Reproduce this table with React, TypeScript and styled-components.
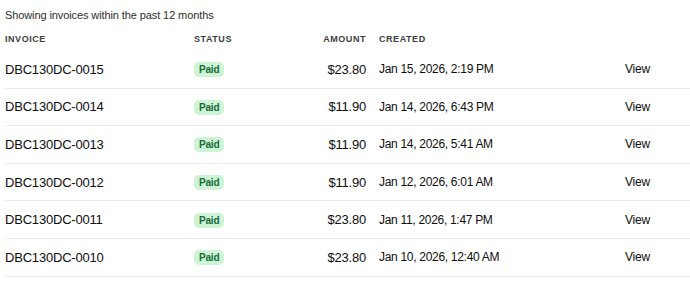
import React from "react";
import styled, { createGlobalStyle } from "styled-components";

const Global = createGlobalStyle`
  html, body { margin: 0; padding: 0; background: #ffffff; }
  body { font-family: "Liberation Sans", Arial, sans-serif; color: #0d0d0d; }
`;

const Page = styled.div`
  padding: 0 0 0 5px;
`;

const Caption = styled.div`
  box-sizing: border-box;
  height: 27px;
  padding-top: 8px;
  line-height: 15px;
  font-size: 11px;
  letter-spacing: -0.1px;
  color: #2d2d2d;
`;

const Row = styled.div<{ $head?: boolean }>`
  display: grid;
  grid-template-columns: 189px 105px 67px 246px 1fr;
  align-items: center;
  height: ${(p) => (p.$head ? "24px" : "37.6px")};
  box-sizing: border-box;
  border-bottom: ${(p) => (p.$head ? "none" : "1px solid #ececec")};
`;

const HeadCell = styled.div<{ $right?: boolean; $gap?: boolean }>`
  font-size: 9px;
  font-weight: 700;
  letter-spacing: 0.55px;
  text-transform: uppercase;
  color: #3d3d3d;
  text-align: ${(p) => (p.$right ? "right" : "left")};
  padding-left: ${(p) => (p.$gap ? "13px" : "0")};
`;

const Cell = styled.div<{ $right?: boolean }>`
  font-size: 13px;
  letter-spacing: -0.2px;
  color: #0d0d0d;
  text-align: ${(p) => (p.$right ? "right" : "left")};
  white-space: nowrap;
`;

const DateCell = styled.div`
  font-size: 12px;
  letter-spacing: -0.3px;
  color: #0d0d0d;
  padding-left: 13px;
  white-space: nowrap;
`;

const Badge = styled.span`
  display: inline-flex;
  align-items: center;
  justify-content: center;
  height: 15px;
  padding: 0 5px;
  border-radius: 5px;
  background: #cdf4d4;
  color: #17693b;
  font-size: 10px;
  font-weight: 700;
`;

const ViewLink = styled.span`
  font-size: 12px;
  letter-spacing: -0.2px;
  color: #0d0d0d;
  padding-left: 13px;
  cursor: pointer;
`;

const invoices = [
  ["DBC130DC-0015", "$23.80", "Jan 15, 2026, 2:19 PM"],
  ["DBC130DC-0014", "$11.90", "Jan 14, 2026, 6:43 PM"],
  ["DBC130DC-0013", "$11.90", "Jan 14, 2026, 5:41 AM"],
  ["DBC130DC-0012", "$11.90", "Jan 12, 2026, 6:01 AM"],
  ["DBC130DC-0011", "$23.80", "Jan 11, 2026, 1:47 PM"],
  ["DBC130DC-0010", "$23.80", "Jan 10, 2026, 12:40 AM"],
];

export default function App() {
  return (
    <Page>
      <Global />
      <Caption>Showing invoices within the past 12 months</Caption>
      <Row $head>
        <HeadCell>Invoice</HeadCell>
        <HeadCell>Status</HeadCell>
        <HeadCell $right>Amount</HeadCell>
        <HeadCell $gap>Created</HeadCell>
        <HeadCell />
      </Row>
      {invoices.map(([id, amt, date]) => (
        <Row key={id}>
          <Cell>{id}</Cell>
          <Cell>
            <Badge>Paid</Badge>
          </Cell>
          <Cell $right>{amt}</Cell>
          <DateCell>{date}</DateCell>
          <ViewLink>View</ViewLink>
        </Row>
      ))}
    </Page>
  );
}
